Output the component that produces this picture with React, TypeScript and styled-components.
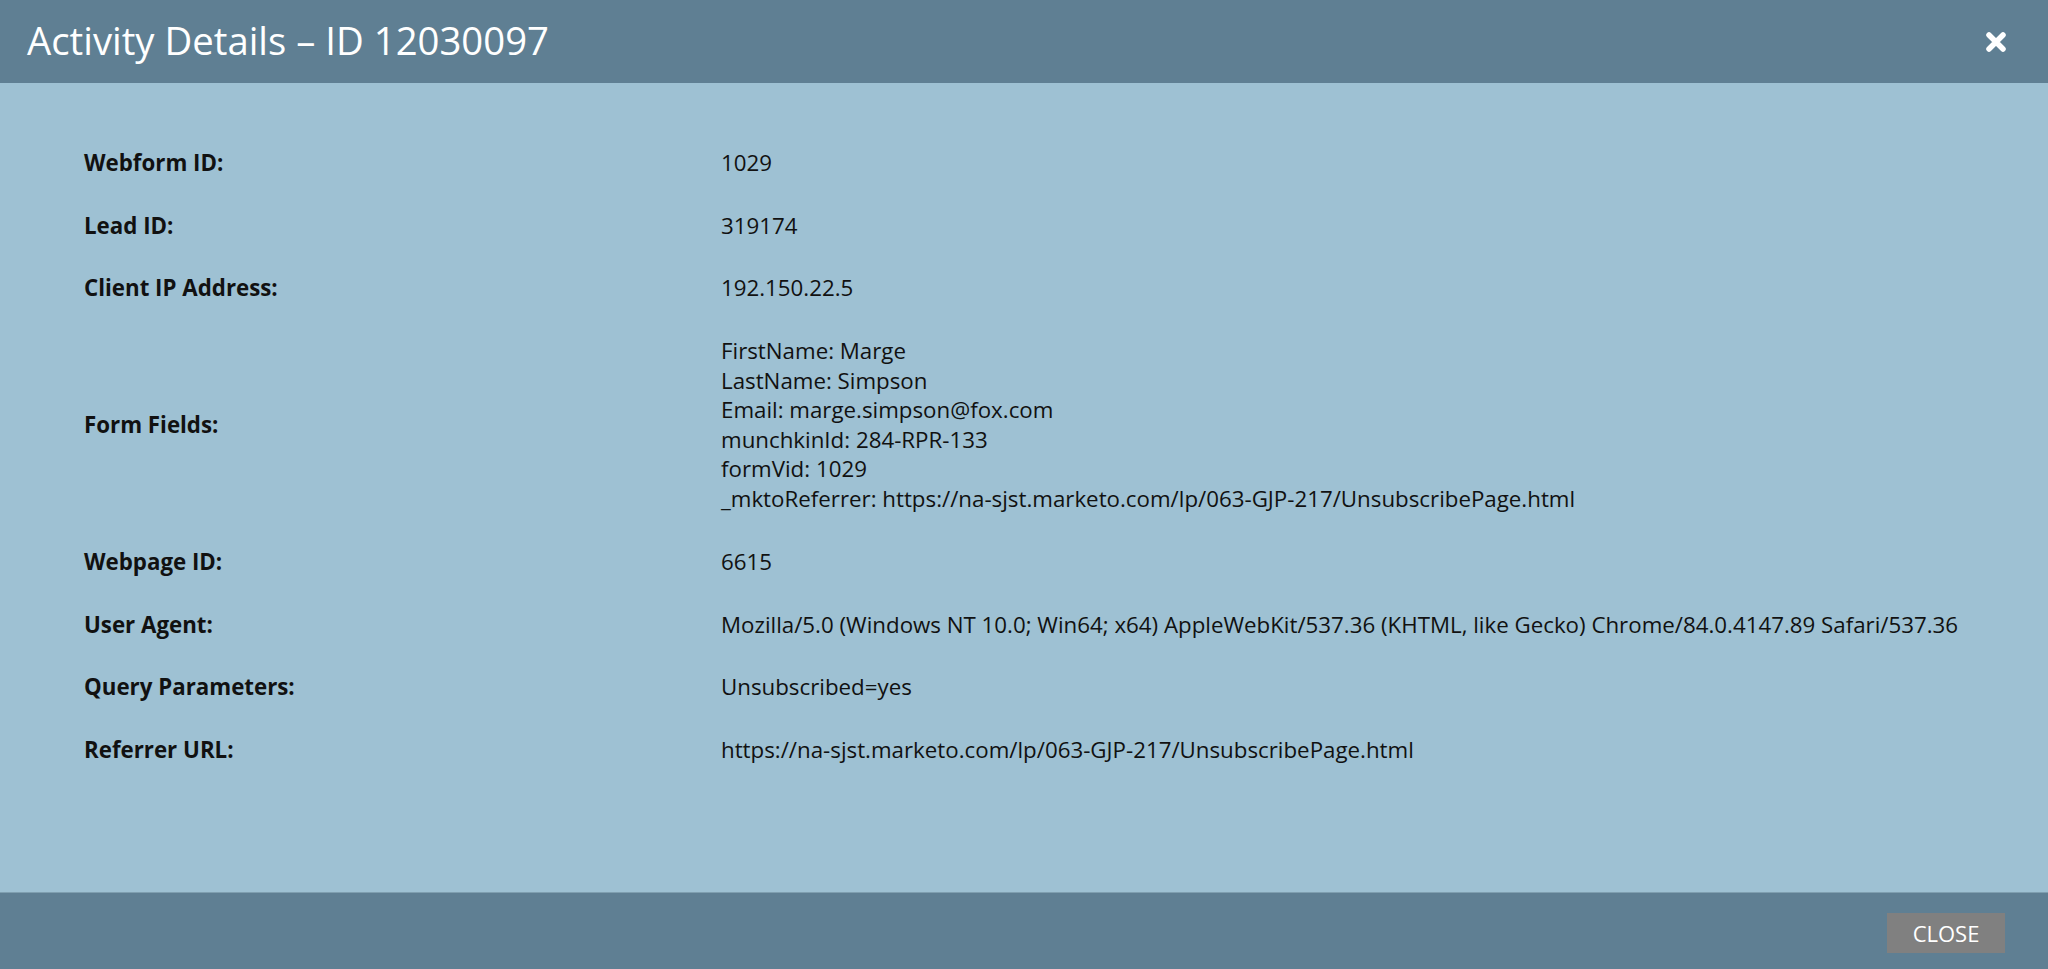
import React from "react";
import styled, { createGlobalStyle } from "styled-components";

const Global = createGlobalStyle`
  html, body { margin: 0; padding: 0; height: 100%; }
  body { font-family: "Open Sans", "Liberation Sans", sans-serif; background: #9ec1d3; }
  #root { height: 100%; }
`;

const Modal = styled.div`
  display: flex;
  flex-direction: column;
  height: 969px;
  width: 2048px;
  background: #9ec1d3;
`;

const Header = styled.header`
  flex: 0 0 83px;
  display: flex;
  align-items: center;
  justify-content: space-between;
  padding: 0 41px 0 27px;
  background: #5f7f93;
  box-sizing: border-box;
`;

const Title = styled.h1`
  margin: 0;
  font-size: 38.3px;
  font-weight: 400;
  color: #ffffff;
  line-height: 1;
  padding-bottom: 2px;
`;

const CloseIcon = styled.button`
  border: 0;
  background: transparent;
  padding: 0;
  width: 22px;
  height: 22px;
  display: flex;
  cursor: pointer;
`;

const Body = styled.main`
  flex: 1;
  padding: 48px 84px 0 84px;
  box-sizing: border-box;
`;

const Row = styled.div`
  display: grid;
  grid-template-columns: 637px 1fr;
  align-items: center;
  padding: 16.7px 0;
  font-size: 22.3px;
  line-height: 29.5px;
  color: #111;
`;

const Label = styled.div`
  font-weight: 700;
`;

const Value = styled.div`
  white-space: nowrap;
`;

const Footer = styled.footer`
  flex: 0 0 77px;
  display: flex;
  align-items: center;
  justify-content: flex-end;
  padding: 3px 43px 0 0;
  background: #5f7f93;
  border-top: 1px solid #7f9fb0;
  box-sizing: border-box;
`;

const CloseButton = styled.button`
  width: 118px;
  height: 40px;
  border: 0;
  background: #808080;
  color: #ffffff;
  font-family: "Open Sans", "Liberation Sans", sans-serif;
  font-size: 22px;
  padding: 0;
  cursor: pointer;
`;

const rows: { label: string; value: string[] }[] = [
  { label: "Webform ID:", value: ["1029"] },
  { label: "Lead ID:", value: ["319174"] },
  { label: "Client IP Address:", value: ["192.150.22.5"] },
  {
    label: "Form Fields:",
    value: [
      "FirstName: Marge",
      "LastName: Simpson",
      "Email: marge.simpson@fox.com",
      "munchkinId: 284-RPR-133",
      "formVid: 1029",
      "_mktoReferrer: https://na-sjst.marketo.com/lp/063-GJP-217/UnsubscribePage.html",
    ],
  },
  { label: "Webpage ID:", value: ["6615"] },
  {
    label: "User Agent:",
    value: [
      "Mozilla/5.0 (Windows NT 10.0; Win64; x64) AppleWebKit/537.36 (KHTML, like Gecko) Chrome/84.0.4147.89 Safari/537.36",
    ],
  },
  { label: "Query Parameters:", value: ["Unsubscribed=yes"] },
  { label: "Referrer URL:", value: ["https://na-sjst.marketo.com/lp/063-GJP-217/UnsubscribePage.html"] },
];

export default function App() {
  return (
    <>
      <Global />
      <Modal>
        <Header>
          <Title>Activity Details – ID 12030097</Title>
          <CloseIcon aria-label="Close">
            <svg width="22" height="22" viewBox="0 0 22 22">
              <path d="M4 4 L18 18 M18 4 L4 18" stroke="#fff" strokeWidth="5.5" strokeLinecap="round" />
            </svg>
          </CloseIcon>
        </Header>
        <Body>
          {rows.map((r) => (
            <Row key={r.label}>
              <Label>{r.label}</Label>
              <Value>
                {r.value.map((v) => (
                  <div key={v}>{v}</div>
                ))}
              </Value>
            </Row>
          ))}
        </Body>
        <Footer>
          <CloseButton>CLOSE</CloseButton>
        </Footer>
      </Modal>
    </>
  );
}
